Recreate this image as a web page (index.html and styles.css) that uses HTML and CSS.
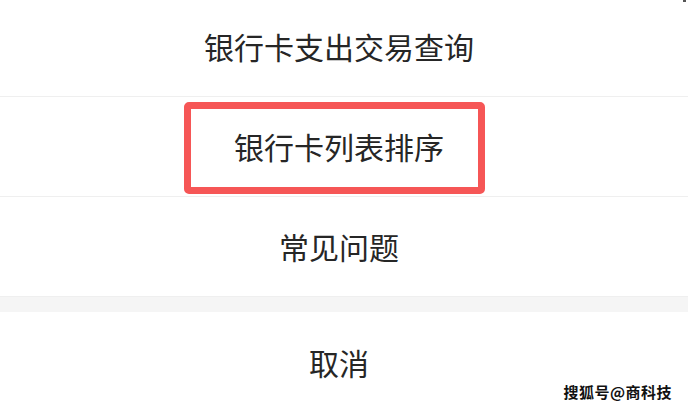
FILE: index.html
```html
<!DOCTYPE html>
<html lang="zh-CN">
<head>
<meta charset="utf-8">
<link rel="stylesheet" href="styles.css">
</head>
<body>
<div class="sheet">
  <div class="item first">银行卡支出交易查询</div>
  <div class="item highlighted"><span class="mark"></span>银行卡列表排序</div>
  <div class="item">常见问题</div>
  <div class="gap"></div>
  <div class="item cancel">取消</div>
</div>
<span class="corner"></span>
<div class="watermark">搜狐号@商科技</div>
</body>
</html>
```

FILE: styles.css
```css
html, body {
  margin: 0;
  padding: 0;
  background: #ffffff;
  overflow: hidden;
}
body {
  width: 688px;
  height: 410px;
  position: relative;
  font-family: "Noto Sans CJK SC", "Noto Sans", sans-serif;
}
.sheet {
  display: flex;
  flex-direction: column;
  margin-top: -3px;
}
.item {
  position: relative;
  height: 99px;
  line-height: 99px;
  border-bottom: 1px solid #efefef;
  text-align: center;
  font-size: 30px;
  font-weight: 400;
  color: #262626;
  padding-right: 10px;
}
.item.cancel {
  border-bottom: none;
  height: 100px;
  line-height: 100px;
}
.gap {
  height: 15px;
  background: #f5f5f5;
}
.mark {
  position: absolute;
  left: 184px;
  top: 5px;
  width: 287px;
  height: 78px;
  border: 7px solid #f65656;
  border-radius: 5px;
}
.corner {
  position: absolute;
  right: 2px;
  top: 0;
  width: 3px;
  height: 2px;
  background: #555;
}
.watermark {
  position: absolute;
  right: 16px;
  bottom: 10px;
  font-size: 15px;
  font-weight: bold;
  color: #111;
  line-height: 16px;
  text-shadow: 0 0 2px #fff, 0 0 2px #fff;
  letter-spacing: 0.5px;
}
```
